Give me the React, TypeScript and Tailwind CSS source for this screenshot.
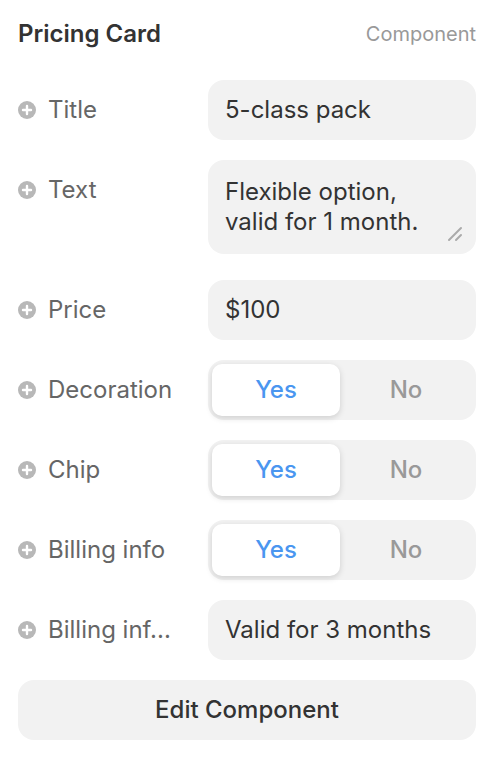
import React from 'react';

function PlusDot() {
  return (
    <svg width="18" height="18" viewBox="0 0 18 18" className="shrink-0">
      <circle cx="9" cy="9" r="9" fill="#b8b8b8" />
      <path d="M9 5v8M5 9h8" stroke="#fff" strokeWidth="2.4" strokeLinecap="round" />
    </svg>
  );
}

function Label({ text }: { text: string }) {
  return (
    <div className="flex h-[60px] w-[190px] shrink-0 items-center gap-3">
      <PlusDot />
      <span className="whitespace-nowrap text-[24px] text-[#666]">{text}</span>
    </div>
  );
}

function Field({ value }: { value: string }) {
  return (
    <div className="flex h-[60px] flex-1 items-center rounded-2xl bg-[#f2f2f2] px-[17px] text-[24px] text-[#333]">
      {value}
    </div>
  );
}

function Toggle() {
  return (
    <div className="flex h-[60px] flex-1 items-center rounded-2xl bg-[#f2f2f2] p-1">
      <div className="flex h-[52px] w-[128px] items-center justify-center rounded-[10px] bg-white text-[24px] font-medium text-[#4a96f0] shadow-[0_2px_6px_rgba(0,0,0,0.15)]">
        Yes
      </div>
      <div className="flex flex-1 items-center justify-center text-[24px] font-medium text-[#999]">No</div>
    </div>
  );
}

export default function App() {
  return (
    <div className="min-h-screen w-[498px] bg-white pl-[18px] pr-[22px] pt-[18px] font-['Inter',sans-serif]">
      <div className="flex h-[32px] items-center justify-between">
        <h1 className="text-[24px] font-semibold text-[#333]">Pricing Card</h1>
        <span className="text-[20px] text-[#999]">Component</span>
      </div>

      <div className="mt-[30px] flex flex-col gap-5">
        <div className="flex">
          <Label text="Title" />
          <Field value="5-class pack" />
        </div>

        <div className="mb-[6px] flex items-start">
          <Label text="Text" />
          <div className="relative h-[94px] flex-1 rounded-2xl bg-[#f2f2f2] px-[17px] py-[17px] text-[24px] leading-[30px] text-[#333]">
            Flexible option,
            <br />
            valid for 1 month.
            <svg width="16" height="16" viewBox="0 0 16 16" className="absolute bottom-[12px] right-[13px]">
              <path d="M2 14L14 2M9 14L14 9" stroke="#aaa" strokeWidth="2" strokeLinecap="round" />
            </svg>
          </div>
        </div>

        <div className="flex">
          <Label text="Price" />
          <Field value="$100" />
        </div>

        <div className="flex">
          <Label text="Decoration" />
          <Toggle />
        </div>

        <div className="flex">
          <Label text="Chip" />
          <Toggle />
        </div>

        <div className="flex">
          <Label text="Billing info" />
          <Toggle />
        </div>

        <div className="flex">
          <Label text="Billing inf..." />
          <Field value="Valid for 3 months" />
        </div>

        <button className="h-[60px] w-full rounded-2xl bg-[#f2f2f2] text-[24px] font-medium text-[#333]">
          Edit Component
        </button>
      </div>
    </div>
  );
}
